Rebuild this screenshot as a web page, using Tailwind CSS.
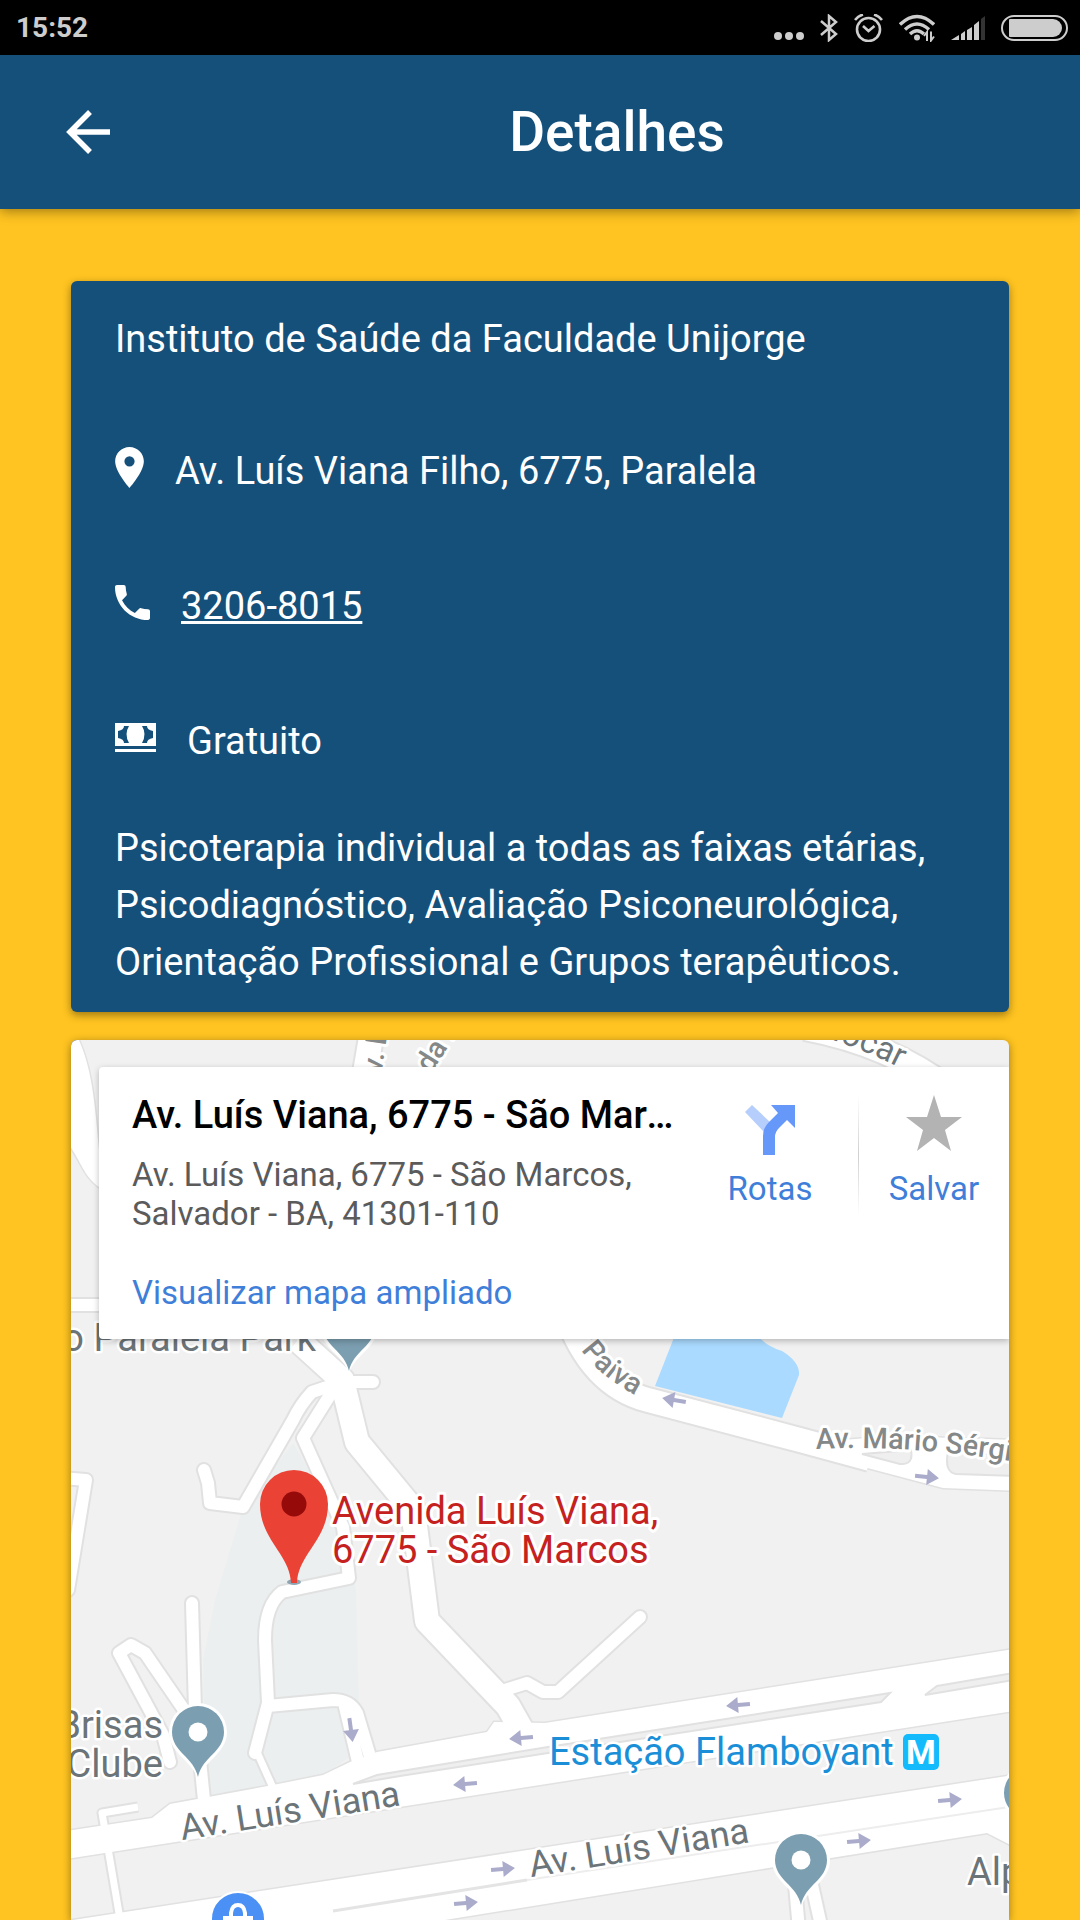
<!DOCTYPE html>
<html lang="pt-BR">
<head>
    <meta charset="UTF-8">
    <meta name="viewport" content="width=device-width, initial-scale=1.0">
    <title>Detalhes</title>
    <script src="https://cdn.jsdelivr.net/npm/@tailwindcss/browser@4"></script>
</head>
<body class="flex flex-col min-h-screen bg-[#ffc421] font-['Roboto',sans-serif]">
    <!-- status bar -->
    <div class="flex items-center justify-between h-[55px] pl-4 pr-3 bg-black text-[#cdcdcd]">
        <span class="text-[28px] leading-8 font-bold">15:52</span>
        <div class="flex items-center gap-4">
            <svg class="w-[30px] h-7" viewBox="0 0 30 28" fill="currentColor"><circle cx="4" cy="22" r="4"/><circle cx="15" cy="22" r="4"/><circle cx="26" cy="22" r="4"/></svg>
            <svg class="w-[18px] h-7" viewBox="0 0 18 28" fill="none" stroke="currentColor" stroke-width="2.5"><path d="M1 7l15 13-7 6V2l7 6L1 21"/></svg>
            <svg class="w-[29px] h-7" viewBox="0 0 29 28" fill="none" stroke="currentColor" stroke-width="2.6"><circle cx="14.500" cy="15.500" r="11.500"/><path d="M9 12l5.500 5 6-5M1 6q3-4 8-5.500M28 6q-3-4-8-5.500"/></svg>
            <svg class="w-9 h-7" viewBox="0 0 36 28" fill="none" stroke="currentColor" stroke-width="3.400"><path d="M1 10.500q17-16 34 0M6 15.500q12-11 24 0M11 20q7-6.500 14 0"/><circle cx="18" cy="23.500" r="3" fill="currentColor" stroke="none"/><path stroke-width="2" d="M28 27V18l-3 4M32 17.500v9l3-4"/></svg>
            <svg class="w-[34px] h-7" viewBox="0 0 34 28" fill="currentColor"><path d="M0 26l8-5v5zM10 20l4-3v9h-4zM16 16l5-3v13h-5zM23 11l5-4v19h-5z"/><path fill="#333" d="M30 5l4-3v24h-4z"/></svg>
            <svg class="w-[67px] h-7" viewBox="0 0 67 28"><rect x="1" y="2" width="65" height="24" rx="12" fill="none" stroke="currentColor" stroke-width="2"/><path d="M9 5h43a9 9 0 0 1 0 18H9a1 1 0 0 1-1-1V6a1 1 0 0 1 1-1z" fill="currentColor"/></svg>
        </div>
    </div>

    <!-- toolbar -->
    <header class="flex items-center h-[154px] bg-[#15507b] text-white shadow-[0_2px_12px_rgba(0,0,0,0.4)]">
        <button aria-label="Voltar" class="flex w-[154px] pl-16">
            <svg class="w-12 h-12" viewBox="0 0 48 48" fill="none" stroke="currentColor" stroke-width="5.500"><path d="M26 4L6 24l20 20M6 24h40"/></svg>
        </button>
        <h1 class="flex-1 text-center text-[55px] leading-16 font-medium">Detalhes</h1>
    </header>

    <main class="flex flex-col flex-1 gap-7 pl-[71px] pr-[71px] pt-18">
        <section class="px-11 pt-[30px] pb-[21px] rounded-md bg-[#15507b] text-white text-[38px] leading-[57px] shadow-[0_3px_8px_rgba(0,0,0,0.4)]">
            <h2>Instituto de Saúde da Faculdade Unijorge</h2>
            <p class="flex items-center gap-[31px] mt-[75px]">
                <svg class="w-[29px] h-[41px] mb-2" viewBox="5 2 14 20" fill="currentColor"><path d="M12 2C8.130 2 5 5.130 5 9c0 5.250 7 13 7 13s7-7.750 7-13c0-3.870-3.130-7-7-7zm0 9.500a2.500 2.500 0 0 1 0-5 2.500 2.500 0 0 1 0 5z"/></svg>
                Av. Luís Viana Filho, 6775, Paralela
            </p>
            <p class="flex items-center gap-[31px] mt-[78px]">
                <svg class="w-[35px] h-[35px] mb-2" viewBox="3 3 18 18" fill="currentColor"><path d="M6.620 10.790c1.440 2.830 3.760 5.140 6.590 6.590l2.200-2.200c.27-.27.67-.36 1.020-.24 1.120.37 2.330.57 3.570.57.550 0 1 .45 1 1V20c0 .55-.45 1-1 1-9.390 0-17-7.610-17-17 0-.55.45-1 1-1h3.500c.55 0 1 .45 1 1 0 1.250.2 2.450.57 3.570.11.35.03.74-.25 1.020l-2.200 2.200z"/></svg>
                <a href="tel:32068015" class="underline">3206-8015</a>
            </p>
            <p class="flex items-center gap-[31px] mt-[78px]">
                <svg class="w-[41px] h-[29px] mb-2" viewBox="0 0 41 29" fill="currentColor"><path fill-rule="evenodd" d="M0 0h41v23H0zM9 3q0 4-6 5v7q6 1 6 5h5q-5-9 0-17zM32 3q0 4 6 5v7q-6 1-6 5h-5q5-9 0-17z"/><path d="M0 26h41v3H0z"/></svg>
                Gratuito
            </p>
            <p class="mt-[50px]">Psicoterapia individual a todas as faixas etárias, Psicodiagnóstico, Avaliação Psiconeurológica, Orientação Profissional e Grupos terapêuticos.</p>
        </section>

        <!-- map -->
        <section class="relative flex-1 min-h-[600px] rounded-t-md overflow-hidden bg-[#f1f1f1] shadow-[0_2px_8px_rgba(0,0,0,0.4)]">
            <svg class="absolute inset-0 w-full h-full" viewBox="71 1040 938 880" preserveAspectRatio="xMinYMin slice" font-family="Roboto, sans-serif">
                <defs>
                    <g id="streets" fill="none" stroke-linecap="round" stroke-linejoin="round">
                        <path d="M327 1387L312 1392Q300 1405 293 1420L243 1507 210 1503 208 1483 204 1470"/>
                        <path d="M330 1395L303 1438 343 1527 349 1578 282 1592Q265 1605 265 1640L268 1703 255 1753"/>
                        <path d="M268 1706L333 1700Q350 1700 357 1713L371 1760M345 1707L359 1766M350 1382H373"/>
                        <path d="M192 1603L195 1710 204 1800M170 1762L163 1735 119 1653 131 1645 145 1653 193 1723"/>
                        <path d="M60 1478L86 1480 68 1590M60 1305H110"/>
                        <path d="M505 1690L527 1683 543 1692 558 1692 640 1617"/>
                        <path d="M795 1885L799 1930M812 1885L822 1930"/>
                    </g>
                    <g id="avenues" fill="none" stroke-linejoin="round">
                        <path d="M298 1340L342 1380 357 1442 413 1510 427 1621 508 1706 530 1745"/>
                        <path d="M565 1310Q590 1385 648 1400L800 1440 870 1459"/>
                        <path d="M374 1020L362 1090M805 1028Q890 1044 950 1090"/>
                    </g>
                    <g id="thin" fill="none" stroke-linejoin="round">
                        <path d="M138 1807L102 1813 121 1925M256 1750L274 1790"/>
                    </g>
                    <g id="highways">
                        <path d="M60 1832L152 1818 170 1804 273 1785 323 1775 350 1762 377 1752 487 1732 494 1722 545 1723 1020 1648V1710L60 1860z"/>
                        <path d="M60 1922L1020 1774V1850L987 1833 420 1924V1940H60z"/>
                        <path d="M820 1442L890 1436 1020 1440V1491L943 1488 860 1466z"/>
                        <path d="M60 1030H74C90 1060 94 1090 99 1150V1187C82 1175 82 1160 60 1132z"/>
                    </g>
                    <g id="place">
                        <path fill="#fff" d="M0 48C-4 30-29 22-29 0a29 29 0 0 1 58 0C29 22 4 30 0 48z"/>
                        <path fill="#7b9eb0" d="M0 45C-4 25-26 20-26 0a26 26 0 0 1 52 0C26 20 4 25 0 45z"/>
                        <circle r="9.500" fill="#fff"/>
                    </g>
                    <path id="arrow" fill="#abaccb" d="M-12-2H0V-8L12 0 0 8V2H-12z"/>
                    <path id="paiva" d="M581 1350Q604 1382 650 1402"/>
                    <path id="mario" d="M816 1449Q930 1443 1070 1472"/>
                    <path id="mocar" d="M812 1034Q880 1052 945 1094"/>
                </defs>

                <path fill="#ebeff0" d="M293 1443L343 1527 356 1590 360 1750 323 1775 205 1797 203 1660 215 1600 243 1507z"/>
                <path fill="#aadaff" d="M675 1335H757Q766 1346 782 1351 800 1362 799 1375L782 1418 655 1386z"/>

                <use href="#streets" stroke="#e1e1e1" stroke-width="16"/>
                <use href="#thin" stroke="#e1e1e1" stroke-width="11"/>
                <use href="#avenues" stroke="#e1e1e1" stroke-width="28"/>
                <use href="#highways" stroke="#e1e1e1" stroke-width="3"/>
                <use href="#streets" stroke="#fff" stroke-width="12"/>
                <use href="#avenues" stroke="#fff" stroke-width="24"/>
                <use href="#highways" fill="#fff"/>
                <use href="#thin" stroke="#fff" stroke-width="7"/>

                <!-- medians -->
                <g fill="#efefef" stroke="#e1e1e1" stroke-width="2">
                    <path d="M353 1784L377 1775 548 1747 890 1693 881 1702 548 1753 400 1776z"/>
                    <path d="M925 1695L937 1686 1020 1672V1679z"/>
                    <path d="M862 1454L911 1450Q914 1465 900 1464z"/>
                    <path d="M948 1452Q944 1472 956 1474L1020 1476V1456z"/>
                </g>
                <path fill="none" stroke="#e4e4e4" stroke-width="3" d="M333 1911L527 1880"/>
                <path fill="none" stroke="#ededed" stroke-width="2" d="M527 1880L1009 1807"/>

                <use href="#arrow" transform="translate(674 1400) rotate(190)"/>
                <use href="#arrow" transform="translate(927 1477) rotate(6)"/>
                <use href="#arrow" transform="translate(351 1730) rotate(82)"/>
                <use href="#arrow" transform="translate(521 1738) rotate(175)"/>
                <use href="#arrow" transform="translate(465 1784) rotate(175)"/>
                <use href="#arrow" transform="translate(738 1705) rotate(175)"/>
                <use href="#arrow" transform="translate(503 1869) rotate(-5)"/>
                <use href="#arrow" transform="translate(466 1903) rotate(-5)"/>
                <use href="#arrow" transform="translate(950 1800) rotate(-5)"/>
                <use href="#arrow" transform="translate(859 1841) rotate(-5)"/>

                <!-- street names -->
                <g fill="#848888" stroke="#fff" stroke-width="6" stroke-linejoin="round" paint-order="stroke" font-size="29" font-weight="500">
                    <text><textPath href="#paiva">Paiva</textPath></text>
                    <text><textPath href="#mario">Av. Mário Sérgio</textPath></text>
                    <text font-size="33" font-weight="400" fill="#6b7478"><textPath href="#mocar">Mocar</textPath></text>
                    <text transform="translate(379 1092) rotate(-82)">Av. L</text>
                    <text transform="translate(431 1074) rotate(-58)">da M</text>
                </g>
                <g fill="#6b7478" stroke="#fff" stroke-width="5" stroke-linejoin="round" paint-order="stroke" font-size="38">
                    <text font-size="36" transform="translate(182 1840) rotate(-9)">Av. Luís Viana</text>
                    <text font-size="36" transform="translate(531 1877) rotate(-9)">Av. Luís Viana</text>
                    <text x="163" y="1738" text-anchor="end">Brisas</text>
                    <text x="163" y="1777" text-anchor="end">Clube</text>
                    <text x="316" y="1351" text-anchor="end">o Paralela Park</text>
                    <text x="967" y="1885">Alp</text>
                </g>

                <use href="#place" x="349" y="1326"/>
                <use href="#place" x="198" y="1732"/>
                <use href="#place" x="801" y="1860"/>
                <use href="#place" x="1030" y="1793"/>
                <circle cx="238" cy="1919" r="27" fill="#4a90f5" stroke="#fff" stroke-width="2"/>
                <path fill="none" stroke="#fff" stroke-width="4" d="M231 1918v-5q1-8 7-8t7 8v5"/>
                <path fill="#fff" d="M223 1916h30v14h-30z"/>

                <text x="549" y="1765" font-size="38" fill="#1a8fd8" stroke="#fff" stroke-width="5" stroke-linejoin="round" paint-order="stroke">Estação Flamboyant</text>
                <rect x="903" y="1734" width="36" height="36" rx="5" fill="#13bbfd"/>
                <text x="921" y="1764" font-size="34" font-weight="700" fill="#fff" text-anchor="middle">M</text>

                <g font-size="38" fill="#c5221f" stroke="#fff" stroke-width="6" stroke-linejoin="round" paint-order="stroke">
                    <text x="332" y="1524">Avenida Luís Viana,</text>
                    <text x="332" y="1563">6775 - São Marcos</text>
                </g>
                <ellipse cx="294" cy="1582" rx="7" ry="3" fill="#8da5b3"/>
                <path fill="#ea4335" d="M291 1583C290 1554 260 1540 260 1504a34 34 0 0 1 68 0C328 1540 298 1554 297 1583z"/>
                <circle cx="294" cy="1504" r="12.500" fill="#960a0a"/>
            </svg>

            <!-- place card over the map -->
            <div class="relative flex ml-7 mt-[27px] h-[272px] rounded-l-sm bg-white shadow-[0_2px_6px_rgba(0,0,0,0.25)]">
                <div class="flex-1 min-w-0 pl-[33px] pt-7 text-[33px] leading-[39px] text-[#5b5b5b]">
                    <h3 class="text-[38px] leading-10 font-medium text-black truncate">Av. Luís Viana, 6775 - São Marcos</h3>
                    <p class="mt-5">Av. Luís Viana, 6775 - São Marcos,<br>Salvador - BA, 41301-110</p>
                    <a href="#" class="inline-block mt-10 text-[#3f7fd9]">Visualizar mapa ampliado</a>
                </div>
                <div class="flex text-[33px] leading-[39px] text-[#3f7fd9]">
                    <a href="#" class="flex flex-col items-center gap-3 w-44 pt-[34px]">
                        <svg class="w-[50px] h-[56px]" viewBox="0 -4 50 56"><path fill="#b6cefb" d="M0 7L7 0 26 18 19 27z"/><path fill="#6698fa" d="M26 0h24v23l-8-8-8 8q-4 4-4 9v18H18V31q0-8 6-14l9-9z"/></svg>
                        Rotas
                    </a>
                    <div class="w-px h-30 mt-7 bg-linear-to-b from-white via-[#d0d0d0] to-white"></div>
                    <button class="flex flex-col items-center gap-3 w-[150px] pt-7">
                        <svg class="w-14 h-[62px]" viewBox="0 0 56 62" fill="#b3b3b3"><path d="M28 0L35 22H56L39 35 45 56 28 43 11 56 17 35 0 22H21z"/></svg>
                        Salvar
                    </button>
                </div>
            </div>
        </section>
    </main>
</body>
</html>
